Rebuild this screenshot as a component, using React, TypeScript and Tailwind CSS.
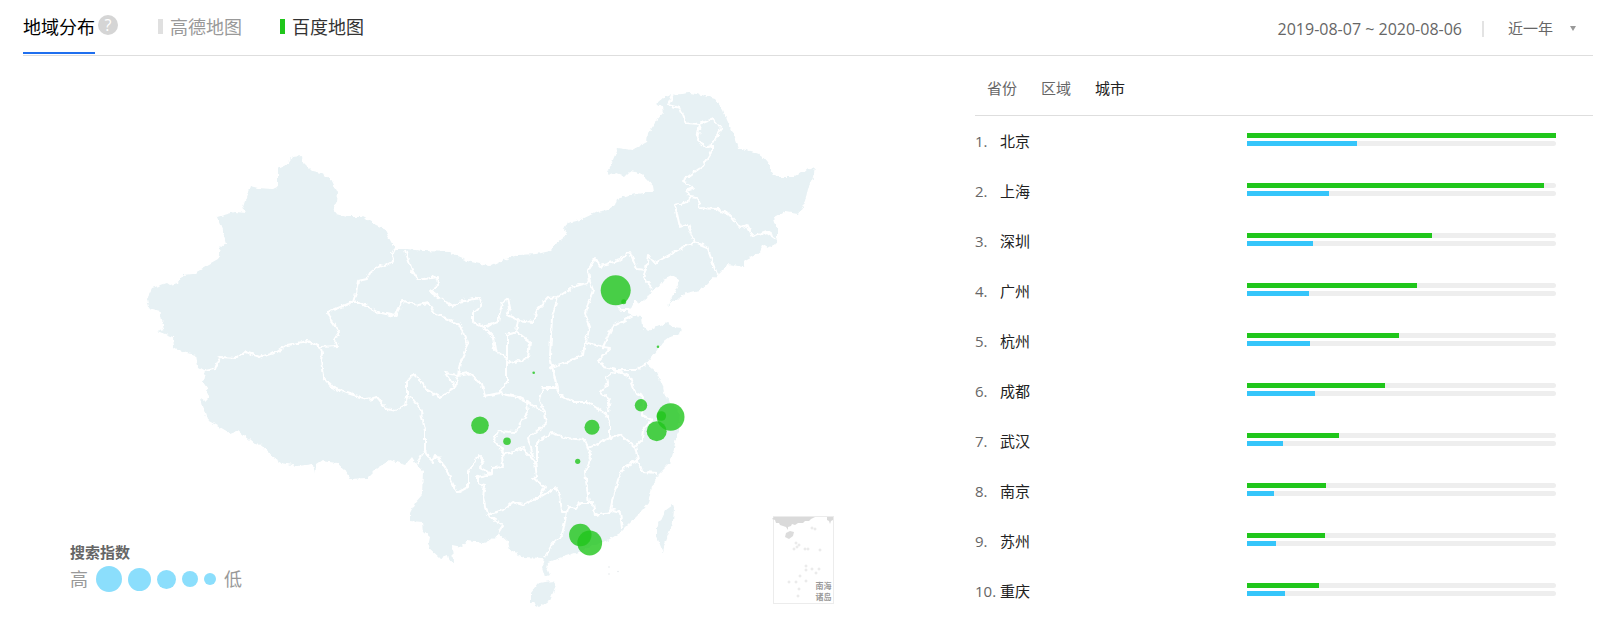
import React from 'react';

interface City {
  name: string;
  current: number;
  previous: number;
}

interface Bubble {
  x: number;
  y: number;
  r: number;
}

const cities: City[] = [
  { name: '北京', current: 100, previous: 35.6 },
  { name: '上海', current: 96.1, previous: 26.5 },
  { name: '深圳', current: 59.9, previous: 21.4 },
  { name: '广州', current: 55, previous: 20 },
  { name: '杭州', current: 49.2, previous: 20.4 },
  { name: '成都', current: 44.7, previous: 22 },
  { name: '武汉', current: 29.8, previous: 11.6 },
  { name: '南京', current: 25.6, previous: 8.7 },
  { name: '苏州', current: 25.2, previous: 9.4 },
  { name: '重庆', current: 23.3, previous: 12.3 },
];

const bubbles: Bubble[] = [
  { x: 615.7, y: 290.3, r: 15 },
  { x: 670.7, y: 417, r: 13.8 },
  { x: 589.7, y: 543, r: 12.4 },
  { x: 580.3, y: 535, r: 11.2 },
  { x: 656.7, y: 431.3, r: 10 },
  { x: 480, y: 425.3, r: 8.8 },
  { x: 592, y: 427.3, r: 7.5 },
  { x: 641, y: 405.3, r: 6.2 },
  { x: 661.3, y: 416, r: 4.8 },
  { x: 507, y: 441.3, r: 3.8 },
  { x: 577.7, y: 461.3, r: 2.6 },
  { x: 623.7, y: 301.7, r: 2.5 },
  { x: 533.7, y: 372.7, r: 1.3 },
  { x: 658, y: 346.7, r: 1.3 },
];

const mainland =
  '292,157 302,156 303,162 312,171 321,173 330,178 337,192 336,202 333,208 336,214 347,217 363,217 377,225 384,228 390,240 395,249 407,249 423,251 450,252 458,257 470,262 490,266 503,260 518,255 537,254 550,251 557,243 567,235 564,229 567,223 580,220 597,212 608,210 615,205 617,199 630,195 643,193 654,193 653,187 647,180 640,173 630,171 625,176 617,173 610,175 607,172 612,162 618,148 632,150 647,142 648,133 657,120 663,113 662,107 657,104 665,97 672,95 690,93 702,95 715,99 723,110 727,120 733,133 738,148 750,151 762,155 768,162 772,172 775,177 793,177 802,172 815,167 813,178 808,188 805,202 798,214 785,212 774,218 777,228 777,243 768,248 763,245 760,252 745,260 743,267 728,264 717,275 700,290 687,293 673,302 668,306 672,298 678,285 679,280 672,276 663,280 658,287 652,290 648,297 640,303 633,300 633,305 628,310 632,316 642,317 643,327 648,332 657,327 667,323 673,327 682,328 680,334 670,337 662,343 655,353 646,364 657,373 663,387 665,397 672,403 680,415 678,432 676,438 673,453 670,463 658,475 652,487 648,503 638,515 625,528 620,533 608,540 600,543 578,552 560,558 548,563 547,568 550,575 545,577 542,567 544,558 523,557 510,550 508,542 498,533 495,538 482,543 467,541 462,547 452,545 453,563 450,562 448,555 440,558 428,547 430,537 424,532 423,522 410,521 410,513 415,503 422,495 423,470 417,465 412,457 405,465 390,460 387,462 377,468 367,478 350,479 345,470 337,463 322,461 316,465 315,474 313,464 298,466 282,463 272,457 262,445 255,444 238,430 230,433 218,426 207,420 203,407 201,398 205,401 208,398 207,388 203,382 205,371 198,367 196,355 182,352 174,347 173,337 157,331 164,329 160,311 149,308 147,298 152,288 167,283 170,285 178,283 183,275 193,274 218,260 220,248 226,243 222,230 217,217 235,212 245,213 243,207 250,186 258,188 272,189 278,186 278,169 287,165';

const taiwan = '672,505 674,508 673,522 665,543 663,552 657,537 657,527 665,510';
const hainan = '553,581 556,585 550,600 540,607 531,602 531,592 538,583';

const borders = [
  // northwest
  '395,249 392,255 393,261 385,266 380,265 370,273 367,279 358,281 356,293 353,302 328,312 332,322 339,332 334,340 338,346 320,347',
  '320,347 308,341 287,345 277,352 260,357 245,352 237,358 220,357 215,369 205,371',
  '320,347 322,353 321,360 323,377 332,387 347,393 367,399 377,397 387,409 395,411 405,405 407,397 407,382 413,374 420,380 427,390 440,397 455,387 445,373 458,375',
  '353,302 360,302 377,312 395,316 403,301 418,305 428,303 435,313 460,325 468,345 460,363 458,375 455,387',
  '405,250 412,270 418,280 437,277 438,285 430,291 443,300 453,307 458,302 480,298 482,305 473,313 473,322 483,327 498,322 502,303 508,298 510,308 507,315 518,320 533,322 537,310 548,298 558,297 573,287 590,282',
  '483,327 493,337 495,350 507,358 507,335 517,332 530,342 528,358 510,363 506,358',
  '518,320 516,332',
  '507,360 507,382 499,393',
  '458,375 468,373 482,385 485,396 499,393 517,397 527,402',
  // southwest
  '407,397 412,398 420,408 425,430 425,450 417,463',
  '425,450 432,462 435,455 445,467 457,493 468,487 468,472 478,455 483,460 480,468 492,474 477,477 477,483 485,485 483,497 487,515 503,525 498,533',
  '492,474 492,468 503,467 502,455 513,452 523,448 535,462 537,477 533,478 545,487 540,497',
  '487,515 503,510 513,502 523,505 540,497 555,488 560,495 562,512 567,512 562,535 553,543 545,557',
  '527,402 528,412 515,432 498,431 494,440 505,455',
  '534,458 528,438 547,423 545,413 527,402',
  '545,413 540,400 543,388 557,388',
  // south and east
  '567,512 568,507 577,508 580,503 593,503 595,515 610,512 613,510 620,512 622,528',
  '610,512 613,497 618,480 623,468 638,460 642,472 658,473',
  '638,460 635,447 642,440 643,430 652,420 642,415 643,397 635,392 630,377 617,370',
  '635,447 620,435 610,438 588,448 585,440 567,438 552,433 537,442 537,463',
  '588,448 591,458 585,472 589,503',
  '557,388 560,395 573,402 587,402 605,413 610,423 610,438',
  '617,370 607,377 608,383 600,392 610,400 608,412',
  // north
  '558,297 552,317 550,357 557,388',
  '590,282 593,290 585,313 590,327 585,342 583,355 570,361 548,368',
  '585,342 603,347 612,327 632,316',
  '603,347 610,348 599,360 603,367 617,370 637,370 646,364',
  '590,282 588,270 595,259 600,266 620,260 630,252 637,269 646,270 643,277 652,288',
  '618,306 621,310 630,310',
  // northeast
  '646,270 648,255 655,263 680,249 695,242 688,225 680,227 675,205 688,202 690,197',
  '695,242 707,247 717,275',
  '690,197 697,198 700,208 717,209 730,215 740,228 747,225 753,237 767,232 777,239',
  '690,197 687,190 693,188 682,181 703,166 712,152 712,145 705,147 697,140 700,124 686,123 680,108 668,105 673,95',
  '700,124 713,119 721,129 712,145',
];

// reefs and islets of the inset map
const islets = [
  [812, 528], [815, 529], [796, 543], [799, 545], [794, 549], [797, 547], [805, 549], [808, 549], [820, 550],
  [806, 566], [806, 570], [812, 569], [819, 569], [816, 573], [800, 576], [789, 582], [796, 582], [806, 581],
  [799, 589], [798, 596],
];

function ChinaMap() {
  return (
    <svg className="block w-full" viewBox="23 56 952 570" role="img" aria-label="地域分布">
      <defs>
        <filter id="coast" x="0" y="0" width="1" height="1" colorInterpolationFilters="sRGB">
          <feTurbulence type="fractalNoise" baseFrequency="0.2" numOctaves={2} seed={4} />
          <feDisplacementMap in="SourceGraphic" scale={5} xChannelSelector="R" yChannelSelector="G" />
        </filter>
      </defs>
      <g filter="url(#coast)">
        <rect x="130" y="80" width="700" height="540" fill="none" />
        <g fill="#e7f1f4">
          <polygon points={mainland} />
          <polygon points={taiwan} />
          <polygon points={hainan} />
        </g>
        <g fill="none" stroke="#fff" strokeWidth="2" strokeLinejoin="round">
          {borders.map((points) => (
            <polyline key={points} points={points} />
          ))}
        </g>
      </g>
      <g fill="#e3e8ea">
        <circle cx="609" cy="567" r="0.8" />
        <circle cx="609" cy="574" r="0.8" />
        <circle cx="618" cy="571.5" r="0.8" />
      </g>

      {/* South China Sea inset */}
      <rect x="773.5" y="516.5" width="60" height="87" fill="#fff" stroke="#ececec" />
      <path
        d="M774 517h41l-4 2-2 2-4 0-2 2-5 0-3 2-3-1-1 2-3 1 0 3-2-3-3-1-3-1-1-2-3 0-1-3-3-1zM827 517h6v3l-2 1-1 3-1-3-2-1z"
        fill="#dadada"
      />
      <path d="M786 533l4-2 4 1-1 4-4 3-4-2z" fill="#dcdcdc" />
      <g fill="none" stroke="#dedede" strokeWidth="0.8">
        {islets.map(([x, y]) => (
          <circle key={`${x}-${y}`} cx={x} cy={y} r="1" />
        ))}
      </g>
      <g className="text-[8px] font-bold" fill="#999">
        <text x="815.5" y="589">南海</text>
        <text x="815.5" y="600">诸岛</text>
      </g>

      <g fill="#20c61b" fillOpacity="0.8">
        {bubbles.map((b) => (
          <circle key={`${b.x}-${b.y}`} cx={b.x} cy={b.y} r={b.r} />
        ))}
      </g>
    </svg>
  );
}

function Header() {
  return (
    <header className="flex h-14 items-center justify-between border-b border-[#dedede]">
      <div className="flex items-center self-start">
        <h1 className="h-[54px] border-b-2 border-[#1f6fef] text-lg leading-[54px] text-black">地域分布</h1>
        <button
          type="button"
          aria-label="帮助"
          className="mb-1 ml-[3px] flex size-5 items-center justify-center rounded-full bg-[#d5d5d5] text-base text-white"
        >
          ?
        </button>
        <button type="button" className="ml-10 flex items-center gap-[7px] text-lg text-[#999]">
          <span className="mb-0.5 h-[15px] w-[5px] bg-[#e0e0e0]" />
          高德地图
        </button>
        <button type="button" className="ml-[38px] flex items-center gap-[7px] text-lg text-[#333]">
          <span className="mb-0.5 h-[15px] w-[5px] bg-[#20c61b]" />
          百度地图
        </button>
      </div>

      <div className="flex items-center pt-0.5 text-[#666]">
        <span className="text-base">2019-08-07 ~ 2020-08-06</span>
        <span className="ml-5 h-4 w-0.5 bg-[#e3e3e3]" />
        <div className="ml-6 flex items-center">
          <select aria-label="时间范围" className="w-16 appearance-none bg-transparent text-[15px] outline-none">
            <option>近一年</option>
          </select>
          <svg className="pointer-events-none mr-[17px] -ml-0.5 h-[5px] w-[6px]" viewBox="0 0 6 5">
            <path d="M0 0h6L3 5z" fill="#999" />
          </svg>
        </div>
      </div>
    </header>
  );
}

function Bar({ value, color }: { value: number; color: string }) {
  return (
    <div className="h-[5px] rounded-r-full bg-[#eee]">
      <div className={`h-full ${color}`} style={{ width: `${value}%` }} />
    </div>
  );
}

function Ranking() {
  return (
    <section>
      <nav className="flex h-[60px] items-center gap-6 border-b border-[#dedede] pt-1.5 pl-3 text-[15px] text-[#666]">
        <button type="button">省份</button>
        <button type="button">区域</button>
        <button type="button" className="text-[#222]">城市</button>
      </nav>
      <ol>
        {cities.map((city, index) => (
          <li key={city.name} className="flex h-[50px] items-center text-[15px]">
            <div className="flex w-[44%]">
              <span className="w-[25px] shrink-0 whitespace-nowrap text-[#666]">{index + 1}.</span>
              <span className="text-[#222]">{city.name}</span>
            </div>
            <div className="flex w-1/2 flex-col gap-[3px] pb-1">
              <Bar value={city.current} color="bg-[#20c61b]" />
              <Bar value={city.previous} color="bg-[#35c5fa]" />
            </div>
          </li>
        ))}
      </ol>
    </section>
  );
}

export default function App() {
  return (
    <main className="bg-white pr-[11px] pl-[23px] font-['Open_Sans','Noto_Sans_CJK_SC',sans-serif]">
      <Header />
      <div className="grid grid-cols-[952fr_618fr]">
        <section className="relative">
          <ChinaMap />
          <div className="absolute bottom-[33px] left-[47px]">
            <div className="text-[15px] leading-[26px] font-bold text-[#666]">搜索指数</div>
            <div className="flex items-center gap-1.5 text-lg text-[#999]">
              <span className="mr-0.5">高</span>
              <span className="size-[26px] rounded-full bg-[#8bdefc]" />
              <span className="size-[23px] rounded-full bg-[#8bdefc]" />
              <span className="size-[19px] rounded-full bg-[#8bdefc]" />
              <span className="size-4 rounded-full bg-[#8bdefc]" />
              <span className="size-3 rounded-full bg-[#8bdefc]" />
              <span className="ml-0.5">低</span>
            </div>
          </div>
        </section>
        <Ranking />
      </div>
    </main>
  );
}
